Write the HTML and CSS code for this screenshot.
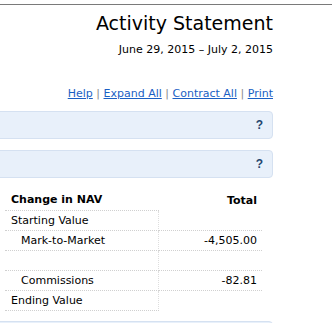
FILE: index.html
```html
<!DOCTYPE html>
<html lang="en">
<head>
    <meta charset="UTF-8">
    <title>Activity Statement</title>
    <link rel="stylesheet" href="styles.css">
</head>
<body>
    <div class="topbar"></div>
    <div class="page">
        <div class="report-header">
            <h1>Activity Statement</h1>
            <div class="period">June 29, 2015 &ndash; July 2, 2015</div>
        </div>

        <div class="links">
            <a href="#">Help</a> <span class="sep">|</span>
            <a href="#">Expand All</a> <span class="sep">|</span>
            <a href="#">Contract All</a> <span class="sep">|</span>
            <a href="#">Print</a>
        </div>

        <div class="section-head"><span class="help">?</span></div>
        <div class="section-head"><span class="help">?</span></div>

        <table class="nav-table">
            <thead>
                <tr>
                    <th class="label">Change in NAV</th>
                    <th class="num">Total</th>
                </tr>
            </thead>
            <tbody>
                <tr>
                    <td class="label">Starting Value</td>
                    <td class="num"></td>
                </tr>
                <tr>
                    <td class="label indent">Mark-to-Market</td>
                    <td class="num">-4,505.00</td>
                </tr>
                <tr>
                    <td class="label">&nbsp;</td>
                    <td class="num"></td>
                </tr>
                <tr>
                    <td class="label indent">Commissions</td>
                    <td class="num">-82.81</td>
                </tr>
                <tr class="last">
                    <td class="label">Ending Value</td>
                    <td class="num"></td>
                </tr>
            </tbody>
        </table>

        <div class="section-head bottom"></div>
    </div>
</body>
</html>
```

FILE: styles.css
```css
* {
    margin: 0;
    padding: 0;
    box-sizing: border-box;
}

body {
    background: #ffffff;
    color: #000000;
    font-family: 'DejaVu Sans', 'Lucida Grande', sans-serif;
    font-size: 11px;
    overflow: hidden;
}

.topbar {
    margin-top: 4px;
    border-top: 1px solid #7a7a7a;
}

.page {
    width: 273px;
}

.report-header {
    text-align: right;
    padding-top: 6px;
}

h1 {
    font-size: 19px;
    font-weight: normal;
    line-height: 24px;
}

.period {
    font-size: 11px;
    line-height: 14px;
    margin-top: 8px;
}

.links {
    text-align: right;
    margin-top: 30px;
    line-height: 14px;
    font-size: 11px;
}

.links a {
    color: #1a5fc4;
}

.sep {
    color: #8a8a8a;
}

.section-head {
    margin-left: -10px;
    height: 28px;
    margin-top: 10px;
    background: #e8f0fa;
    border: 1px solid #d5e1f1;
    border-radius: 4px;
    display: flex;
    align-items: center;
    justify-content: flex-end;
    padding-right: 9px;
}

.section-head + .section-head {
    margin-top: 11px;
}

.help {
    font-family: 'Liberation Sans', Arial, sans-serif;
    font-weight: bold;
    font-size: 12px;
    color: #23466f;
}

.nav-table {
    margin-top: 12px;
    margin-left: 5px;
    border-collapse: collapse;
    width: 257px;
}

.nav-table th,
.nav-table td {
    height: 20px;
    padding: 0 5px 0 6px;
    text-align: left;
    white-space: nowrap;
    border-bottom: 1px dotted #d0d0d0;
}

.nav-table th {
    font-weight: bold;
}

.nav-table .label {
    width: 153px;
}

.nav-table td.label {
    border-right: 1px dotted #dedede;
}

.nav-table th.num {
    border-bottom: none;
}

.nav-table .num {
    text-align: right;
}

.nav-table .indent {
    padding-left: 16px;
}

.nav-table .last td.num {
    border-bottom-color: transparent;
}

.section-head.bottom {
    margin-top: 10px;
}
```
